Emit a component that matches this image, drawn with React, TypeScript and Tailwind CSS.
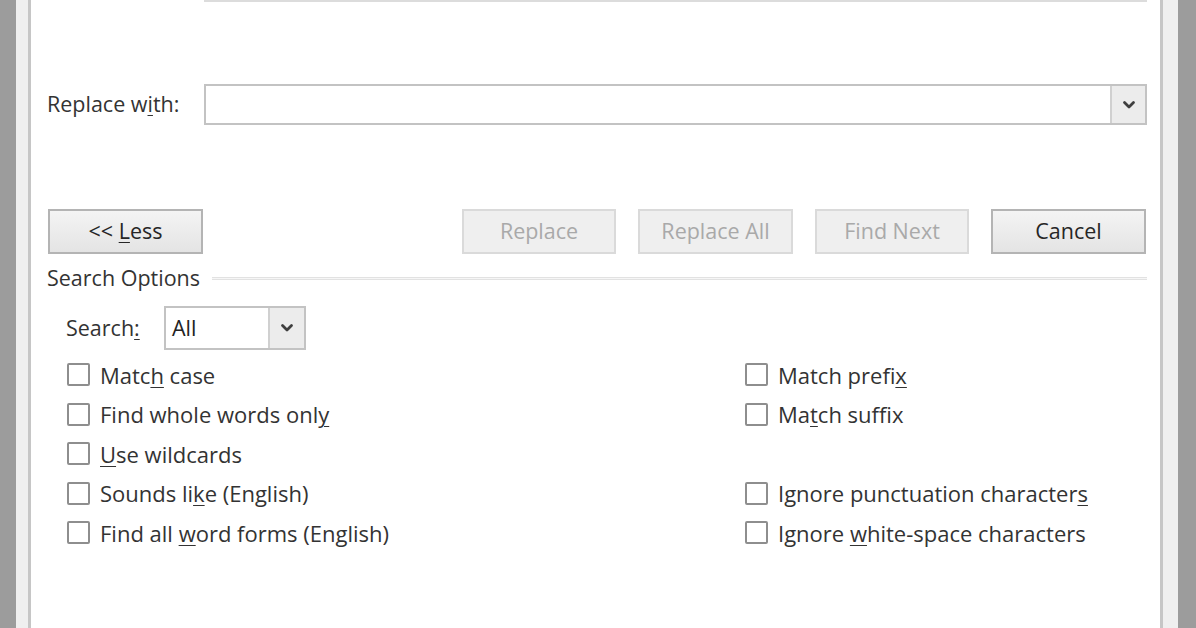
import React from 'react';

const font = { fontFamily: '"Open Sans", "Noto Sans", sans-serif' };

const Chevron = () => (
  <svg width="14" height="10" viewBox="0 0 14 10" className="text-[#3f3f3f]">
    <path d="M2.5 2.5L7 7L11.5 2.5" fill="none" stroke="currentColor" strokeWidth="2.8" strokeLinecap="round" strokeLinejoin="round" />
  </svg>
);

// label with one access-key letter underlined
const Label = ({ text, k }: { text: string; k: number }) => (
  <span>
    {text.slice(0, k)}
    <span className="underline underline-offset-[3px] decoration-1">{text[k]}</span>
    {text.slice(k + 1)}
  </span>
);

const Check = ({ text, k }: { text: string; k: number }) => (
  <div className="flex items-center h-[39.5px]">
    <div className="w-[23px] h-[23px] border-2 border-[#8e8e8e] bg-white rounded-[2px]" />
    <div className="ml-[10px] text-[22px] text-[#333] leading-none">
      <Label text={text} k={k} />
    </div>
  </div>
);

const Btn = ({ children, disabled, w = 'w-[155px]' }: { children: React.ReactNode; disabled?: boolean; w?: string }) => (
  <button
    className={`${w} h-[45px] text-[21.5px] ${
      disabled
        ? 'bg-[#efefef] border-2 border-[#dadada] text-[#a9a9a9]'
        : 'bg-gradient-to-b from-[#f4f4f4] to-[#e4e4e4] border-2 border-[#b4b4b4] text-[#262626]'
    }`}
  >
    {children}
  </button>
);

export default function App() {
  return (
    <div className="flex w-[1196px] h-[628px] overflow-hidden bg-white" style={font}>
      {/* window frame, left */}
      <div className="w-[16px] bg-[#9c9c9c]" />
      <div className="w-[12px] bg-[#efefef]" />
      <div className="w-[3px] bg-[#c6c6c6]" />

      <div className="w-[1129px] pl-[16px] pr-[13px] flex flex-col">
        {/* bottom of the "Find what" box */}
        <div className="ml-[157px] h-[2px] border-b-2 border-[#dcdcdc]" />

        <div className="flex items-center mt-[82px]">
          <div className="w-[157px] text-[21.5px] text-[#333]">
            <Label text="Replace with:" k={9} />
          </div>
          <div className="flex-1 h-[41px] border-2 border-[#c3c3c3] flex">
            <div className="flex-1 bg-white" />
            <div className="w-[35px] bg-[#ececec] border-l-2 border-[#d0d0d0] flex items-center justify-center">
              <Chevron />
            </div>
          </div>
        </div>

        <div className="flex mt-[84px]">
          <div className="ml-px">
            <Btn>
              {'<< '}
              <Label text="Less" k={0} />
            </Btn>
          </div>
          <div className="ml-[259px] flex gap-[22px]">
            <Btn disabled w="w-[154px]">Replace</Btn>
            <Btn disabled>Replace All</Btn>
            <Btn disabled w="w-[154px]">Find Next</Btn>
            <Btn>Cancel</Btn>
          </div>
        </div>

        <div className="flex items-center mt-[10px] h-[28px]">
          <div className="text-[21.5px] text-[#333] leading-none">Search Options</div>
          <div className="flex-1 ml-[12px] h-[3px] border-t border-b border-[#e2e2e2] bg-[#f6f6f6]" />
        </div>

        <div className="flex items-center mt-[14px] ml-[19px]">
          <div className="w-[98px] text-[21.5px] text-[#333]">
            <Label text="Search:" k={6} />
          </div>
          <div className="w-[142px] h-[44px] border-2 border-[#c3c3c3] flex">
            <div className="flex-1 bg-white pl-[6px] flex items-center text-[21.5px] text-[#222]">All</div>
            <div className="w-[36px] bg-[#ececec] border-l-2 border-[#d0d0d0] flex items-center justify-center">
              <Chevron />
            </div>
          </div>
        </div>

        <div className="grid grid-cols-[678px_1fr] ml-[20px] mt-[5px]">
          <div className="flex flex-col">
            <Check text="Match case" k={4} />
            <Check text="Find whole words only" k={20} />
            <Check text="Use wildcards" k={0} />
            <Check text="Sounds like (English)" k={9} />
            <Check text="Find all word forms (English)" k={9} />
          </div>
          <div className="flex flex-col">
            <Check text="Match prefix" k={11} />
            <Check text="Match suffix" k={2} />
            <div className="h-[39.5px]" />
            <Check text="Ignore punctuation characters" k={28} />
            <Check text="Ignore white-space characters" k={7} />
          </div>
        </div>
      </div>

      {/* window frame, right */}
      <div className="w-[3px] bg-[#c6c6c6]" />
      <div className="w-[15px] bg-[#efefef]" />
      <div className="w-[18px] bg-[#9c9c9c]" />
    </div>
  );
}
